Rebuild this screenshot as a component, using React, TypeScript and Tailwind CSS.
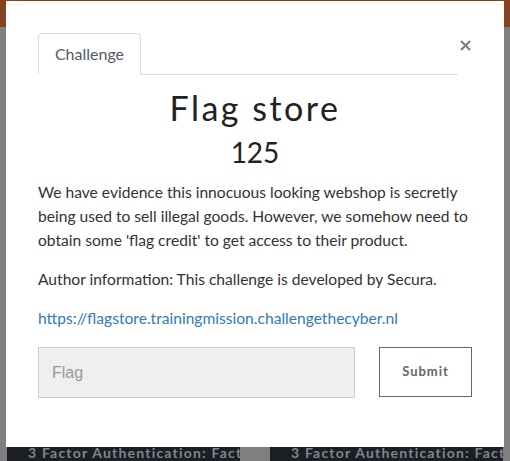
import React from "react";

function Card() {
  return (
    <div className="w-[233px] h-full bg-[#1b1e22] overflow-hidden whitespace-nowrap pl-[21px]">
      <div className="font-['Lato',sans-serif] font-bold text-[14px] tracking-[1.2px] text-[#7f8791] leading-[20px] pt-[2px]">
        3 Factor Authentication: Fact
      </div>
    </div>
  );
}

export default function App() {
  return (
    <div className="relative w-[510px] h-[461px] overflow-hidden bg-[#7f7f7f] font-['Lato',sans-serif]">
      {/* background page */}
      <div className="flex flex-col h-full">
        <div className="h-[27px] bg-[#83431f]" />
        <div className="flex-1" />
        <div className="h-[20px] flex pl-[7px] gap-[30px]">
          <Card />
          <Card />
        </div>
      </div>

      {/* modal */}
      <div className="absolute left-[6px] top-[1px] w-[498px] h-[446px] bg-white pt-8 px-8">
        <div className="flex items-start">
          <div className="flex-1 flex border-b border-[#dddddd]">
            <div className="-mb-px h-[42px] w-[103px] flex items-center justify-center bg-white border border-[#dddddd] border-b-transparent rounded-t-[4px] text-[16px] text-[#555a66]">
              Challenge
            </div>
          </div>
          <div className="w-[14px] flex justify-center mt-[7px]">
            <svg width="11" height="11" viewBox="0 0 11 11">
              <path d="M1 1 L10 10 M10 1 L1 10" stroke="#7a7a7a" strokeWidth="2" />
            </svg>
          </div>
        </div>

        <h1 className="mt-[13px] text-center text-[34px] leading-[40px] tracking-[2.5px] text-[#222]">
          Flag store
        </h1>
        <div className="mt-[6px] text-center text-[28px] leading-[36px] text-[#222]">125</div>

        <p className="mt-[10px] -mr-[6px] text-[15.6px] leading-[24px] text-[#333]">
          We have evidence this innocuous looking webshop is secretly being used to sell illegal goods. However, we somehow need to obtain some 'flag credit' to get access to their product.
        </p>
        <p className="mt-[15px] text-[15.6px] leading-[24px] text-[#333]">
          Author information: This challenge is developed by Secura.
        </p>
        <p className="mt-[15px] text-[15.6px] leading-[24px] text-[#337ab7]">
          https://flagstore.trainingmission.challengethecyber.nl
        </p>

        <div className="mt-[17px] flex gap-[24px]">
          <div className="w-[317px] h-[51px] bg-[#efefef] border border-[#cccccc] flex items-center pl-[13px] font-['Liberation_Sans',sans-serif] text-[16px] text-[#999]">
            Flag
          </div>
          <button className="w-[93px] h-[50px] bg-white border border-[#666] text-[13px] font-bold tracking-[1px] text-[#666]">
            Submit
          </button>
        </div>
      </div>
    </div>
  );
}
